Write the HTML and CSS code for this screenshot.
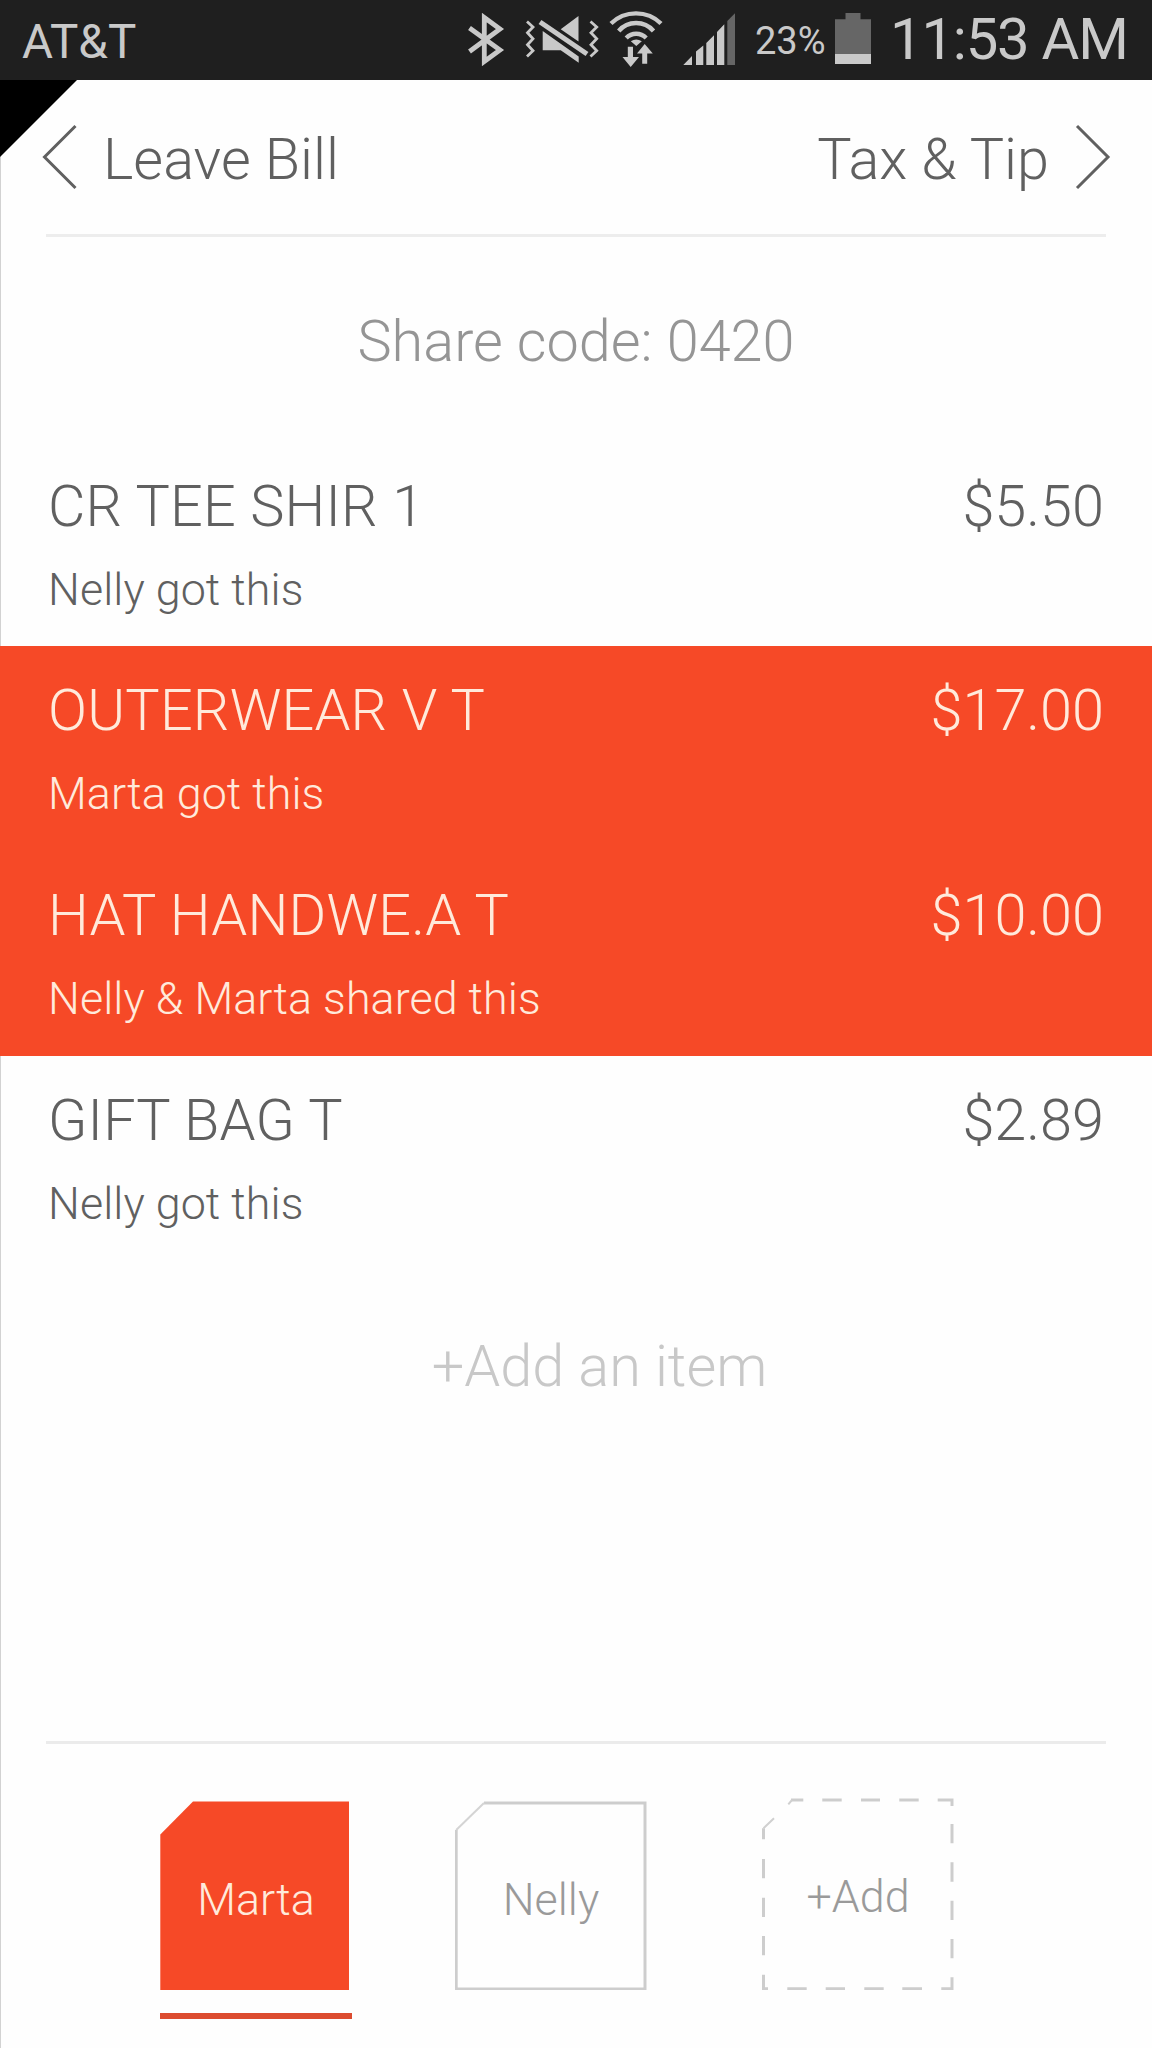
FILE: index.html
```
<!DOCTYPE html>
<html lang="en">
<head>
    <meta charset="UTF-8">
    <meta name="viewport" content="width=device-width, initial-scale=1.0">
    <title>Split the Bill</title>
    <link rel="stylesheet" href="styles.css">
</head>
<body>
    <div class="status-bar">
        <span class="carrier">AT&amp;T</span>
        <!-- bluetooth -->
        <svg class="status-icon" width="55" height="80" viewBox="460 0 55 80">
            <path d="M469.5 28 L500 50 L484.3 61.5 V17.5 L500 29 L469.5 51.5" fill="none" stroke="#c9c9c9" stroke-width="4.8"/>
        </svg>
        <!-- muted, vibrate -->
        <svg class="status-icon" width="90" height="80" viewBox="515 0 90 80">
            <path d="M560.7 29.3 L578.5 16 V41.5 Z M542.7 31 L578.7 56.5 V62.7 L560.7 50.3 H542.7 Z" fill="#c9c9c9"/>
            <path d="M540 22 L587 54" stroke="#c9c9c9" stroke-width="5"/>
            <path d="M527 21.5 L533 27 L527.5 32.7 L533 38.7 L527.5 44.7 L533 50.7 L527 56.5 M590.5 21.5 L596.7 27 L591 32.7 L596.7 38.7 L591 44.7 L596.7 50.7 L590.5 56.5" fill="none" stroke="#c9c9c9" stroke-width="2.8"/>
        </svg>
        <!-- wifi with traffic arrows -->
        <svg class="status-icon" width="65" height="80" viewBox="605 0 65 80">
            <path d="M611 23.5 A36 36 0 0 1 661 23.5 M618.7 31 A23 23 0 0 1 653.5 31 M626.2 38 A14 14 0 0 1 646.2 38" fill="none" stroke="#c9c9c9" stroke-width="4.4"/>
            <path d="M630.8 41.3 Q636.2 37.5 641.8 41.3 L636.3 46 Z" fill="#c9c9c9"/>
            <path d="M627.8 46.8 H633 V57 H639 L630.7 67 L622.5 57 H627.8 Z M642.2 63.8 V53.5 H637 L644.7 44 L652.8 53.5 H647.2 V63.8 Z" fill="#c9c9c9"/>
        </svg>
        <!-- signal -->
        <svg class="status-icon" width="84" height="80" viewBox="670 0 84 80">
            <path d="M683.3 65 L692 56 V65 Z M696 65 V51.5 L703.3 45.5 V65 Z M706.3 65 V43 L714 35.3 V65 Z M717 65 V32 L724.3 24.3 V65 Z" fill="#c9c9c9"/>
            <path d="M727.3 65 V21 L735 13.3 V65 Z" fill="#666"/>
        </svg>
        <span class="percent">23%</span>
        <svg class="status-icon" width="60" height="80" viewBox="830 0 60 80">
            <path d="M845.5 13 H860.5 V19.3 H871 V54 H835 V19.3 H845.5 Z" fill="#666"/>
            <path d="M835 54 H871 V64 H835 Z" fill="#c9c9c9"/>
        </svg>
        <span class="clock">11:53 AM</span>
    </div>

    <div class="screen">
        <div class="fold"></div>

        <div class="nav">
            <a class="nav-link" href="#leave">
                <svg width="36" height="66" viewBox="0 0 36 66"><path d="M34.5 2 L3.5 33 L34.5 64"/></svg>
                <span>Leave Bill</span>
            </a>
            <a class="nav-link" href="#tax">
                <span>Tax &amp; Tip</span>
                <svg width="36" height="66" viewBox="0 0 36 66"><path d="M2 2 L33 33 L2 64"/></svg>
            </a>
        </div>

        <div class="share">Share code: 0420</div>

        <div class="items">
            <div class="item">
                <div class="item-row"><span class="item-name">CR TEE SHIR 1</span><span>$5.50</span></div>
                <div class="item-who">Nelly got this</div>
            </div>
            <div class="item selected">
                <div class="item-row"><span class="item-name">OUTERWEAR V T</span><span>$17.00</span></div>
                <div class="item-who">Marta got this</div>
            </div>
            <div class="item selected">
                <div class="item-row"><span class="item-name">HAT HANDWE.A T</span><span>$10.00</span></div>
                <div class="item-who">Nelly &amp; Marta shared this</div>
            </div>
            <div class="item">
                <div class="item-row"><span class="item-name">GIFT BAG T</span><span>$2.89</span></div>
                <div class="item-who">Nelly got this</div>
            </div>
        </div>

        <div class="add-item">+Add an item</div>

        <div class="people">
            <div class="person active">
                <svg class="tile" width="192" height="192" viewBox="0 0 192 192">
                    <path d="M33 3.5 H189 V192 H0.3 V36.5 Z" fill="#f64927"/>
                </svg>
                <span>Marta</span>
            </div>
            <div class="person">
                <svg class="tile" width="192" height="192" viewBox="0 0 192 192">
                    <path d="M29 5 H190 V191 H1.2 V32" fill="none" stroke="#cdcdcd" stroke-width="3"/>
                    <path d="M1.2 32 L29 5" fill="none" stroke="#d4d4d4" stroke-width="2"/>
                </svg>
                <span>Nelly</span>
            </div>
            <div class="person new">
                <svg class="tile" width="192" height="192" viewBox="0 0 192 192">
                    <path d="M29 2 H41.3 M60.3 2 H79.7 M99 2 H118 M137.3 2 H156.7 M175.7 2 H190 V8 M190 26 V45.3 M190 64.3 V83.7 M190 102.7 V122 M190 141 V160.3 M190 179.3 V190.7 H179.3 M160 190.7 H140.3 M121.7 190.7 H102.3 M83 190.7 H63.7 M44.7 190.7 H25.3 M6 190.7 H1.5 V176.7 M1.5 157.3 V138 M1.5 119 V99.7 M1.5 80.3 V61 M1.5 41.3 V30.3" fill="none" stroke="#cdcdcd" stroke-width="3"/>
                    <path d="M1.5 30.3 L12 20.3 M26.3 6.3 L30 2" fill="none" stroke="#d0d0d0" stroke-width="2"/>
                </svg>
                <span>+Add</span>
            </div>
        </div>
    </div>
</body>
</html>
```
FILE: styles.css
```
* {
    box-sizing: border-box;
}
body {
    margin: 0;
    width: 1152px;
    height: 2048px;
    overflow: hidden;
    font-family: Roboto, sans-serif;
    font-weight: 300;
    font-size: 57.6px;
    color: #606060;
    background-color: #fefefe;
}
/* status bar */
.status-bar {
    display: flex;
    height: 80px;
    line-height: 80px;
    background-color: #1f1f1f;
    color: #c9c9c9;
    font-weight: 400;
    white-space: nowrap;
}
.status-icon {
    flex: none;
}
.carrier {
    width: 460px;
    padding: 2px 0 0 22px;
    font-size: 47.5px;
}
.percent {
    width: 76px;
    padding: 1px 0 0 1px;
    font-size: 38px;
}
.clock {
    font-size: 58px;
    letter-spacing: -1.2px;
    margin-top: -1px;
}
/* page */
.screen {
    position: relative;
    display: flex;
    flex-direction: column;
    height: 1968px;
    border-left: 1px solid #d2d2d2;
}
.fold {
    position: absolute;
    top: 0;
    left: -1px;
    width: 77px;
    height: 77px;
    background-color: #000;
    clip-path: polygon(0 0, 100% 0, 0 100%);
}
.nav {
    display: flex;
    justify-content: space-between;
    height: 157px;
    margin: 0 46px 0 45px;
    border-bottom: 3px solid #ededed;
}
.nav-link {
    display: flex;
    align-items: center;
    gap: 26px;
    margin: 0 -5px;
    color: inherit;
    text-decoration: none;
}
.nav-link span {
    padding-top: 5px;
}
.nav-link path {
    fill: none;
    stroke: #606060;
    stroke-width: 3;
}
.share {
    height: 204.5px;
    padding: 5px 1px 0 0;
    line-height: 200px;
    text-align: center;
    color: #959595;
}
.item {
    height: 204.8px;
    padding: 31px 48px 0 47px;
}
.item.selected {
    margin-left: -1px;
    padding-left: 48px;
    background-color: #f64927;
    color: #ffeadb;
}
.item-row {
    display: flex;
    justify-content: space-between;
    line-height: 68px;
}
.item-name {
    letter-spacing: 0.2px;
}
.item-who {
    margin-top: 22px;
    font-size: 44.8px;
    line-height: 54px;
    letter-spacing: 0.07px;
}
.add-item {
    flex: 1;
    padding: 72px 0 0 46px;
    line-height: 68px;
    text-align: center;
    color: #c8c8c8;
}
/* people */
.people {
    display: flex;
    height: 307px;
    margin: 0 46px 0 45px;
    padding: 54px 0 0 114px;
    border-top: 3px solid #ebebeb;
}
.person {
    position: relative;
    width: 192px;
    height: 221px;
    margin-right: 103px;
    padding-top: 75px;
    font-size: 44.8px;
    line-height: 54px;
    text-align: center;
    color: #9a9a9a;
}
.person.active {
    border-bottom: 6px solid #dc4c30;
    color: #ffeadb;
}
.person.new {
    margin: 0 0 0 12px;
    padding-top: 72px;
}
.person span {
    position: relative;
}
.tile {
    position: absolute;
    top: 0;
    left: 0;
}
```
